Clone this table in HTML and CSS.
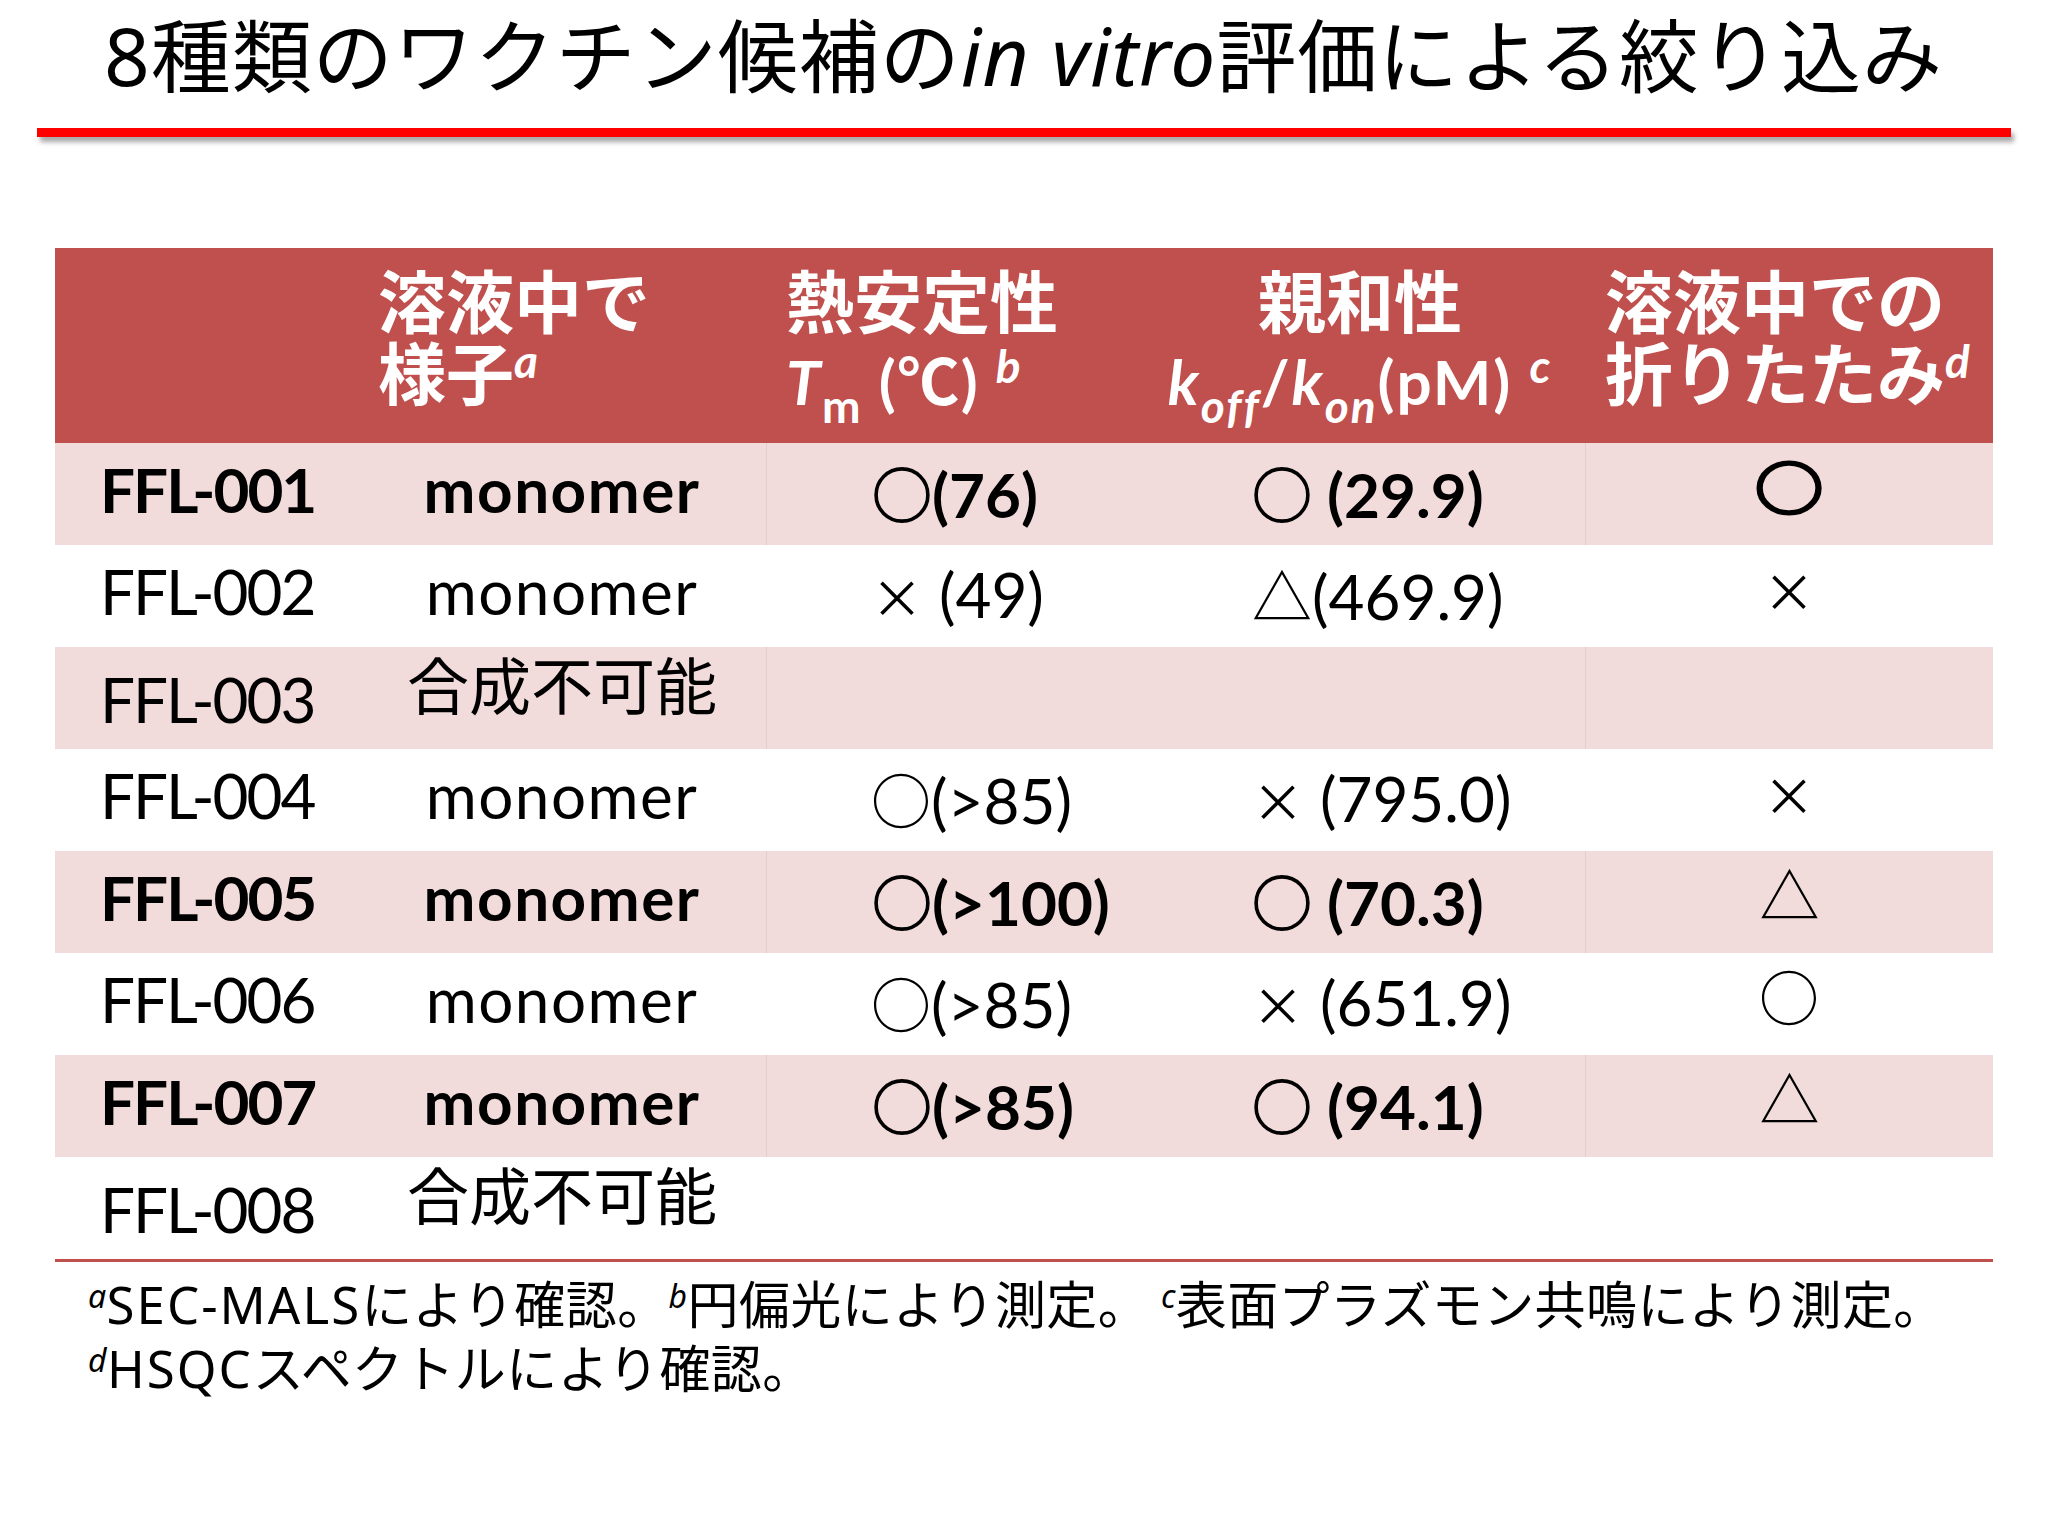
FILE: index.html
```html
<!DOCTYPE html>
<html lang="ja">
<head>
<meta charset="utf-8">
<title>8種類のワクチン候補のin vitro評価による絞り込み</title>
<link rel="stylesheet" href="styles.css">
</head>
<body>
<div class="slide">
  <h1 class="title">8種類のワクチン候補の<span class="it">in vitro</span>評価による絞り込み</h1>
  <div class="rule"></div>

  <div class="table">
    <div class="thead">
      <div class="th"></div>
      <div class="th c2">溶液中で<br>様子<i class="sup">a</i></div>
      <div class="th c3">熱安定性<br><span class="lat"><i>T</i><span class="sub">m</span> (℃) <i class="sup">b</i></span></div>
      <div class="th c4">親和性<br><span class="lat"><i>k</i><i class="sub">off</i>/<i>k</i><i class="sub">on</i>(pM) <i class="sup">c</i></span></div>
      <div class="th c5">溶液中での<br>折りたたみ<i class="sup">d</i></div>
    </div>

    <div class="row pink bold">
      <div class="td id">FFL-001</div>
      <div class="td st">monomer</div>
      <div class="td tm"><span class="v"><span class="sym">○</span>(76)</span></div>
      <div class="td af"><span class="v"><span class="sym">○</span> (29.9)</span></div>
      <div class="td fo"><span class="sym big">○</span></div>
    </div>
    <div class="row">
      <div class="td id">FFL-002</div>
      <div class="td st">monomer</div>
      <div class="td tm"><span class="v"><span class="sym x">×</span> (49)</span></div>
      <div class="td af"><span class="v"><span class="sym">△</span>(469.9)</span></div>
      <div class="td fo"><span class="sym x">×</span></div>
    </div>
    <div class="row pink">
      <div class="td id low">FFL-003</div>
      <div class="td st na">合成不可能</div>
      <div class="td tm"></div>
      <div class="td af"></div>
      <div class="td fo"></div>
    </div>
    <div class="row">
      <div class="td id">FFL-004</div>
      <div class="td st">monomer</div>
      <div class="td tm"><span class="v"><span class="sym">○</span>(&gt;85)</span></div>
      <div class="td af"><span class="v"><span class="sym x">×</span> (795.0)</span></div>
      <div class="td fo"><span class="sym x">×</span></div>
    </div>
    <div class="row pink bold">
      <div class="td id">FFL-005</div>
      <div class="td st">monomer</div>
      <div class="td tm"><span class="v"><span class="sym">○</span>(&gt;100)</span></div>
      <div class="td af"><span class="v"><span class="sym">○</span> (70.3)</span></div>
      <div class="td fo"><span class="sym thin">△</span></div>
    </div>
    <div class="row">
      <div class="td id">FFL-006</div>
      <div class="td st">monomer</div>
      <div class="td tm"><span class="v"><span class="sym">○</span>(&gt;85)</span></div>
      <div class="td af"><span class="v"><span class="sym x">×</span> (651.9)</span></div>
      <div class="td fo"><span class="sym thin">○</span></div>
    </div>
    <div class="row pink bold">
      <div class="td id">FFL-007</div>
      <div class="td st">monomer</div>
      <div class="td tm"><span class="v"><span class="sym">○</span>(&gt;85)</span></div>
      <div class="td af"><span class="v"><span class="sym">○</span> (94.1)</span></div>
      <div class="td fo"><span class="sym thin">△</span></div>
    </div>
    <div class="row last">
      <div class="td id low">FFL-008</div>
      <div class="td st na">合成不可能</div>
      <div class="td tm"></div>
      <div class="td af"></div>
      <div class="td fo"></div>
    </div>
  </div>

  <div class="notes">
    <p><i class="fn">a</i><span class="nl">SEC-MALS</span>により確認。<i class="fn">b</i>円偏光により測定。 <i class="fn">c</i>表面プラズモン共鳴により測定。</p>
    <p><i class="fn">d</i><span class="nl">HSQC</span>スペクトルにより確認。</p>
  </div>
</div>
</body>
</html>
```

FILE: styles.css
```css
* { box-sizing: border-box; margin: 0; padding: 0; }
html, body { width: 2048px; height: 1536px; background: #fff; }
body { font-family: "Noto Sans CJK JP", sans-serif; color: #000; overflow: hidden; }

.slide { width: 2048px; height: 1536px; display: flex; flex-direction: column; }

/* title */
.title {
  font-family: "Noto Sans", "Noto Sans CJK JP", sans-serif;
  font-weight: 400;
  font-size: 80px;
  line-height: 110px;
  height: 128px;
  padding: 0 0 0 104px;
  letter-spacing: 1px;
  white-space: nowrap;
}
.title .it { font-style: italic; }

.rule {
  height: 9px;
  margin: 0 37px;
  background: #ff0000;
  box-shadow: 3px 5px 5px rgba(0, 0, 0, 0.35);
}

/* table */
.table { margin: 111px 0 0 55px; width: 1938px; }

.thead, .row {
  display: grid;
  grid-template-columns: 303px 408px 369px 450px 408px;
}

.thead {
  height: 195px;
  background: #c0504d;
  color: #fff;
  font-weight: 700;
  font-size: 68px;
  line-height: 72px;
  padding-top: 15px;
}
.th { white-space: nowrap; }
.th.c2 { padding-left: 20px; }
.th.c3 { padding-left: 20px; }
.th.c4 { text-align: center; }
.th.c5 { padding-left: 20px; }
.th i { font-style: italic; }
.lat {
  font-family: Lato, "Noto Sans CJK JP", sans-serif;
  font-size: 62px;
  vertical-align: -5px;
  line-height: 0;
}
.th.c3 .lat { letter-spacing: 1.5px; }
.th.c4 .lat { letter-spacing: 2px; }
.th .sub { font-size: 46px; vertical-align: -18px; line-height: 0; }
.th .sup {
  font-family: Lato, sans-serif;
  font-size: 46px;
  vertical-align: 22px;
  line-height: 0;
}

.row { height: 102px; grid-template-rows: 102px; }
.row.pink { background: #f2dcdb; }
.row.pink .tm, .row.pink .fo { border-left: 1px solid #e6cdcc; }
.row.last { border-bottom: 3px solid #c0504d; height: 105px; }

.td {
  display: flex;
  align-items: center;
  font-family: Lato, "Noto Sans CJK JP", sans-serif;
  font-size: 62px;
  white-space: nowrap;
}
.bold .td { font-weight: 700; }

.td.id { padding-left: 45px; padding-bottom: 10px; letter-spacing: -2px; }
.td.id.low { padding-bottom: 0; padding-top: 2px; }
.td.st { justify-content: center; padding-bottom: 10px; letter-spacing: 1.5px; }
.td.st.na {
  font-family: "Noto Sans CJK JP", sans-serif;
  font-weight: 400;
  letter-spacing: 0;
  line-height: 62px;
  padding-bottom: 31px;
}
.td.tm { padding-left: 105px; padding-bottom: 2px; }
.td.af { padding-left: 117px; padding-bottom: 2px; }
.td .v { line-height: 70px; }
.td.fo { justify-content: center; padding-bottom: 19px; }

.sym { font-family: "Noto Sans CJK JP", sans-serif; font-size: 60px; font-weight: 400; }
.fo .sym { line-height: 70px; }
.bold .sym { -webkit-text-stroke: 1.4px #000; }
.bold .sym.thin { -webkit-text-stroke: 0; }
.sym.x { font-size: 52px; }
.fo .sym.x { margin-top: 6px; }
.sym.big {
  display: inline-block;
  font-size: 62px;
  -webkit-text-stroke: 3.5px #000;
  transform: scale(1.1, 0.9);
}

/* footnotes */
.notes {
  margin: 9px 0 0 88px;
  font-size: 51px;
  line-height: 62px;
  letter-spacing: 0.4px;
  white-space: nowrap;
}
.notes .nl { font-family: "Noto Sans", sans-serif; letter-spacing: 2px; }
.notes .fn {
  font-family: "Noto Sans", sans-serif;
  font-size: 32px;
  vertical-align: 16px;
  line-height: 0;
}
```
